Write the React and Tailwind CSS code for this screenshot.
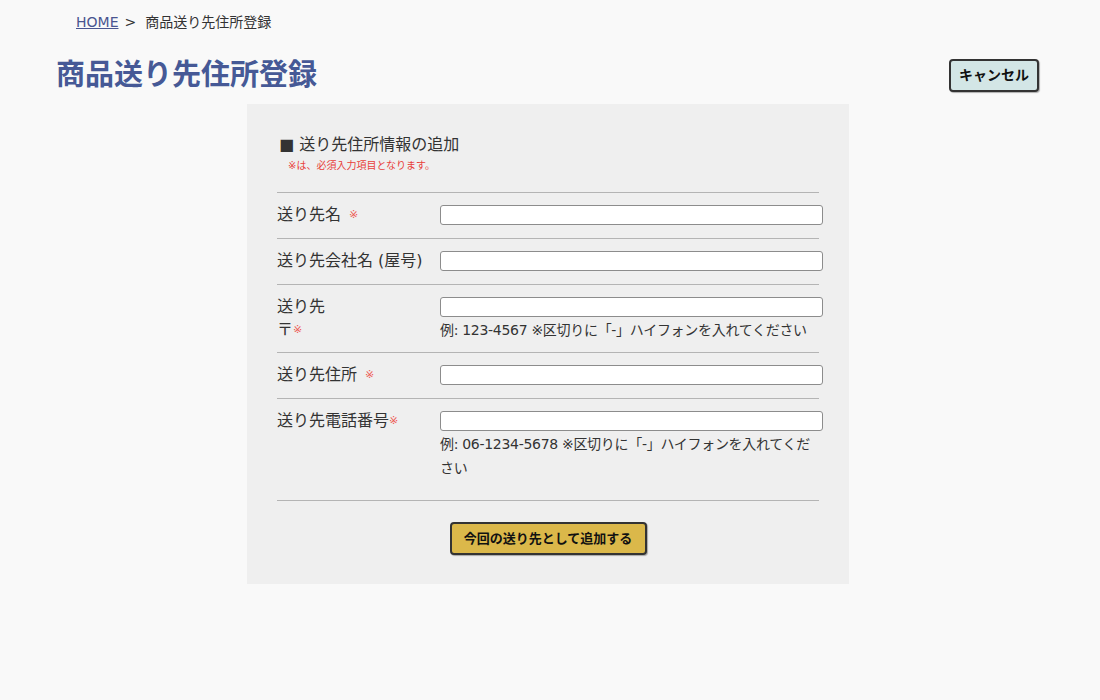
import React from "react";

const FONT = { fontFamily: '"DejaVu Sans", "Noto Sans CJK JP", sans-serif' };

const Req = ({ space }) => (
  <span className={`text-[11px] text-[#ee5a55] align-top ${space ? "ml-2" : ""}`}>※</span>
);

const Row = ({ label, children, hint, pb = "pb-[12px]" }) => (
  <div className={`flex border-b border-[#b4b4b4] pt-[12px] ${pb} w-[542px]`}>
    <div className="w-[163px] shrink-0 text-[16px] leading-[23px] text-[#333] -mt-[2px]">{label}</div>
    <div className="w-[383px] shrink-0">
      <input
        type="text"
        className="block w-[383px] h-[20px] bg-white border border-[#8c8c8c] rounded-[3px] outline-none"
      />
      {hint && <p className="mt-[1px] text-[14px] leading-[24px] text-[#333] tracking-[-0.3px]">{hint}</p>}
    </div>
  </div>
);

export default function App() {
  return (
    <div className="min-h-[700px] bg-[#f9f9f9] text-[#333]" style={FONT}>
      <div className="pt-[11px] pl-[76px] text-[14px] leading-[22px]">
        <a href="#" className="text-[#4a5590] underline">HOME</a>
        <span className="ml-[6px] mr-[9px]">&gt;</span>
        <span>商品送り先住所登録</span>
      </div>

      <div className="flex items-center justify-between pl-[56px] pr-[61px] mt-[22px]">
        <h1 className="text-[29px] font-bold text-[#465996] leading-[40px]">商品送り先住所登録</h1>
        <button className="w-[90px] h-[33px] bg-[#d3e6e6] border-2 border-[#333] rounded-[4px] text-[14px] font-bold text-[#111] shadow-[1px_1px_1px_rgba(0,0,0,0.3)]">
          キャンセル
        </button>
      </div>

      <div className="w-[602px] mx-auto mt-[9px] bg-[#efefef] pl-[30px] pt-[30px] pb-[29px] translate-x-[-2px]">
        <h2 className="pl-[2px] text-[16px] leading-[22px] font-normal">■ 送り先住所情報の追加</h2>
        <p className="pl-[11px] text-[10px] leading-[20px] text-[#e8403a]">※は、必須入力項目となります。</p>
        <div className="mt-[16px] border-t border-[#b4b4b4] w-[542px]">
          <Row label={<>送り先名<Req space /></>} />
          <Row label="送り先会社名 (屋号)" />
          <Row
            label={<>送り先<br />〒<Req /></>}
            hint="例: 123-4567 ※区切りに「-」ハイフォンを入れてください"
            pb="pb-[10px]"
          />
          <Row label={<>送り先住所<Req space /></>} />
          <Row
            label={<>送り先電話番号<Req /></>}
            hint={<>例: 06-1234-5678 ※区切りに「-」ハイフォンを入れてくだ<br />さい</>}
            pb="pb-[20px]"
          />
        </div>
        <div className="flex justify-center w-[542px] mt-[21px]">
          <button className="w-[197px] h-[33px] bg-[#dbb84a] border-2 border-[#333] rounded-[4px] text-[13px] font-bold text-[#111] shadow-[1px_1px_1px_rgba(0,0,0,0.3)]">
            今回の送り先として追加する
          </button>
        </div>
      </div>
    </div>
  );
}
